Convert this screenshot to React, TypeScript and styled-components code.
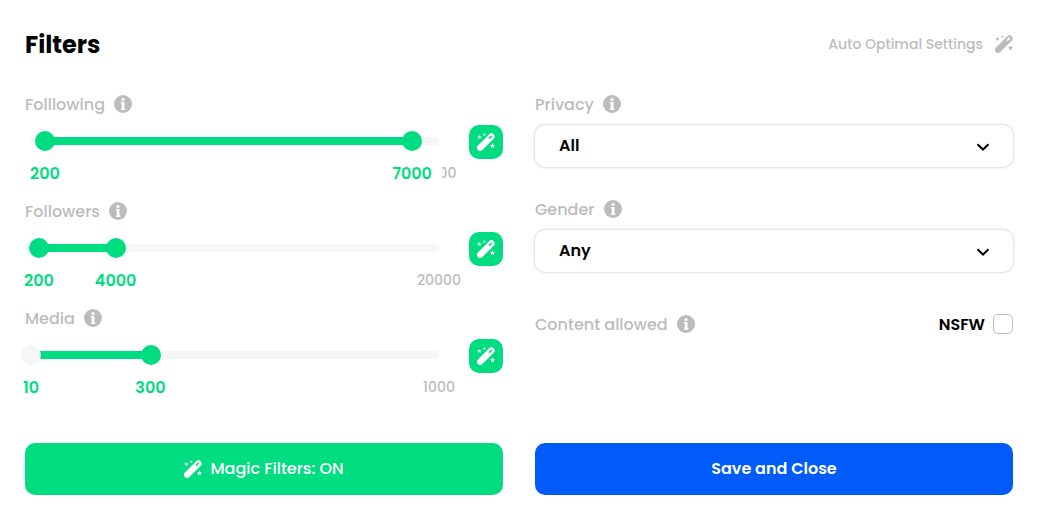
import React, { useId, useState } from "react";
import styled, { createGlobalStyle } from "styled-components";

const green = "#00dd80";
const grey = "#bcbcbc";
const pale = "#f6f6f6";

const GlobalStyle = createGlobalStyle`
  *, *::before, *::after { box-sizing: border-box; }
  body {
    margin: 0;
    background: #fff;
    color: #000;
    font-family: Poppins, Inter, "Open Sans", sans-serif;
    font-size: 16px;
    line-height: 24px;
    -webkit-font-smoothing: antialiased;
  }
  button, input, select { font: inherit; color: inherit; margin: 0; }
  button { cursor: pointer; border: 0; padding: 0; }
  svg { display: block; flex: none; }
`;

const Panel = styled.main`
  padding: 24px 25px;
`;

const Header = styled.header`
  display: flex;
  align-items: center;
  justify-content: space-between;
  height: 40px;
`;

const Title = styled.h1`
  margin: 0;
  padding-top: 2px;
  font-size: 24px;
  line-height: 40px;
  font-weight: 700;
`;

const AutoButton = styled.button`
  display: flex;
  align-items: center;
  gap: 12px;
  background: none;
  color: ${grey};
  font-size: 14px;
  font-weight: 500;
`;

const Columns = styled.div`
  display: grid;
  grid-template-columns: 1fr 1fr;
  column-gap: 32px;
  margin-top: 28px;
`;

const FieldLabel = styled.div`
  display: flex;
  align-items: center;
  gap: 9px;
  height: 24px;
  color: ${grey};
  font-weight: 500;
`;

const LabelText = styled.span`
  padding-top: 2px;
`;

const RangeField = styled.section`
  height: 107px;
`;

const RangeRow = styled.div`
  display: flex;
  align-items: flex-start;
  gap: 30px;
  padding: 9px 0 0 6px;
`;

const RangeBody = styled.div`
  flex: 1;
  min-width: 0;
`;

const Track = styled.div`
  position: relative;
  height: 8px;
  margin: 12px 0 16px;
  border-radius: 4px;
  background: ${pale};
`;

const Fill = styled.div`
  position: absolute;
  top: 0;
  height: 100%;
  background: ${green};
`;

const Thumb = styled.input<{ $idle: boolean }>`
  position: absolute;
  top: -6px;
  left: -10px;
  width: calc(100% + 20px);
  height: 20px;
  appearance: none;
  background: none;
  pointer-events: none;
  outline: none;

  &::-webkit-slider-runnable-track {
    height: 20px;
    background: none;
  }
  &::-webkit-slider-thumb {
    appearance: none;
    width: 20px;
    height: 20px;
    border-radius: 50%;
    background: ${(p) => (p.$idle ? pale : green)};
    pointer-events: auto;
    cursor: pointer;
  }
`;

const Scale = styled.div`
  position: relative;
  height: 24px;
`;

const Mark = styled.span<{ $limit?: boolean }>`
  position: absolute;
  top: 0;
  padding: ${(p) => (p.$limit ? "0" : "1px 10px 0")};
  transform: translateX(-50%);
  background: #fff;
  color: ${(p) => (p.$limit ? grey : green)};
  font-size: ${(p) => (p.$limit ? 14 : 16)}px;
  font-weight: ${(p) => (p.$limit ? 500 : 600)};
  white-space: nowrap;
`;

const WandButton = styled.button`
  display: grid;
  place-items: center;
  width: 34px;
  height: 34px;
  border-radius: 10px;
  background: ${green};
  color: #fff;
`;

const SelectField = styled.section`
  height: 105px;
`;

const SelectBox = styled.div`
  display: grid;
  align-items: center;
  margin-top: 9px;

  & > * { grid-area: 1 / 1; }
  svg { justify-self: end; margin-right: 23px; pointer-events: none; }
`;

const Select = styled.select`
  appearance: none;
  width: 100%;
  height: 42px;
  padding: 0 48px 0 24px;
  border: 0;
  border-radius: 10px;
  background: #fff;
  box-shadow: 0 0 3px rgba(0, 0, 0, 0.28);
  font-weight: 600;
`;

const ContentRow = styled.section`
  display: flex;
  align-items: center;
  justify-content: space-between;
  padding-top: 10px;
`;

const CheckLabel = styled.label`
  display: flex;
  align-items: center;
  gap: 8px;
  height: 24px;
  color: #000;
  font-weight: 600;
`;

const Checkbox = styled.input`
  appearance: none;
  width: 20px;
  height: 20px;
  border: 1px solid ${grey};
  border-radius: 5px;
  background: #fff;
  &:checked { background: ${green}; border-color: ${green}; }
`;

const Actions = styled.footer`
  display: grid;
  grid-template-columns: 1fr 1fr;
  column-gap: 32px;
  margin-top: 30px;
`;

const ActionButton = styled.button<{ $color: string; $weight: number }>`
  display: flex;
  align-items: center;
  justify-content: center;
  gap: 8px;
  height: 52px;
  border-radius: 10px;
  background: ${(p) => p.$color};
  color: #fff;
  font-weight: ${(p) => p.$weight};
`;

const WandIcon = () => (
  <svg width="18" height="18" viewBox="0 0 18 18" fill="currentColor" aria-hidden="true">
    <path
      fillRule="evenodd"
      d="M.9 12.5 12.2 1.2a3.2 3.2 0 0 1 4.5 0 3.2 3.2 0 0 1 0 4.5L5.4 17a3.2 3.2 0 0 1-4.5 0 3.2 3.2 0 0 1 0-4.5ZM12 4.6a.8.8 0 0 0 0 1.1.8.8 0 0 0 1.1 0l1.9-1.9a.8.8 0 0 0 0-1.1.8.8 0 0 0-1.1 0Z"
    />
    <path d="m2.5 1.9.6 1.3 1.5.2-1.1 1 .3 1.5-1.3-.8-1.4.8.3-1.5-1.1-1 1.5-.2Z" />
    <path d="m7.3 0 .5 1 1.1.1-.9.7.3 1.1-1-.6-1 .6.3-1.1-.8-.7 1.1-.1Z" />
    <path d="m15.5 10.3.8 1.6 1.7.2-1.2 1.2.3 1.8-1.6-.9-1.6.9.3-1.8-1.2-1.2 1.7-.2Z" />
  </svg>
);

const InfoIcon = () => (
  <svg width="18" height="18" viewBox="0 0 18 18" aria-hidden="true">
    <circle cx="9" cy="9" r="9" fill={grey} />
    <circle cx="9" cy="4.5" r="1.6" fill="#fff" />
    <path d="M6.9 7h3.6v6.5h.8V15H6.9v-1.5h.8v-5h-.8Z" fill="#fff" />
  </svg>
);

const ChevronIcon = () => (
  <svg
    width="14"
    height="14"
    viewBox="0 0 14 14"
    fill="none"
    stroke="#000"
    strokeWidth="2"
    aria-hidden="true"
  >
    <path d="m1.5 5.3 5.5 5.2 5.5-5.2" />
  </svg>
);

interface RangeProps {
  label: string;
  min: number;
  max: number;
  initial: [number, number];
}

function RangeFilter({ label, min, max, initial }: RangeProps) {
  const [low, setLow] = useState(initial[0]);
  const [high, setHigh] = useState(initial[1]);
  const at = (value: number) => ((value - min) / (max - min)) * 100;

  return (
    <RangeField>
      <FieldLabel>
        <LabelText>{label}</LabelText>
        <InfoIcon />
      </FieldLabel>
      <RangeRow>
        <RangeBody>
          <Track>
            <Fill style={{ left: `${at(low)}%`, width: `${at(high) - at(low)}%` }} />
            <Thumb
              type="range"
              aria-label={`${label} minimum`}
              $idle={low === min}
              min={min}
              max={max}
              value={low}
              onChange={(e) => setLow(Math.min(Number(e.target.value), high))}
            />
            <Thumb
              type="range"
              aria-label={`${label} maximum`}
              $idle={false}
              min={min}
              max={max}
              value={high}
              onChange={(e) => setHigh(Math.max(Number(e.target.value), low))}
            />
          </Track>
          <Scale>
            <Mark $limit style={{ left: "100%" }}>{max}</Mark>
            <Mark style={{ left: `${at(low)}%` }}>{low}</Mark>
            <Mark style={{ left: `${at(high)}%` }}>{high}</Mark>
          </Scale>
        </RangeBody>
        <WandButton type="button" aria-label={`Optimise ${label}`}>
          <WandIcon />
        </WandButton>
      </RangeRow>
    </RangeField>
  );
}

function SelectFilter({ label, options }: { label: string; options: string[] }) {
  const id = useId();
  return (
    <SelectField>
      <FieldLabel as="label" htmlFor={id}>
        <LabelText>{label}</LabelText>
        <InfoIcon />
      </FieldLabel>
      <SelectBox>
        <Select id={id}>
          {options.map((option) => (
            <option key={option}>{option}</option>
          ))}
        </Select>
        <ChevronIcon />
      </SelectBox>
    </SelectField>
  );
}

export default function App() {
  return (
    <>
      <GlobalStyle />
      <Panel>
        <Header>
          <Title>Filters</Title>
          <AutoButton type="button">
            Auto Optimal Settings
            <WandIcon />
          </AutoButton>
        </Header>
        <Columns>
          <div>
            <RangeFilter label="Folllowing" min={-60} max={7500} initial={[200, 7000]} />
            <RangeFilter label="Followers" min={-190} max={20000} initial={[200, 4000]} />
            <RangeFilter label="Media" min={10} max={1000} initial={[10, 300]} />
          </div>
          <div>
            <SelectFilter label="Privacy" options={["All"]} />
            <SelectFilter label="Gender" options={["Any"]} />
            <ContentRow>
              <FieldLabel>
                <LabelText>Content allowed</LabelText>
                <InfoIcon />
              </FieldLabel>
              <CheckLabel>
                <LabelText>NSFW</LabelText>
                <Checkbox type="checkbox" />
              </CheckLabel>
            </ContentRow>
          </div>
        </Columns>
        <Actions>
          <ActionButton type="button" $color={green} $weight={500}>
            <WandIcon />
            Magic Filters: ON
          </ActionButton>
          <ActionButton type="button" $color="#005bf9" $weight={600}>
            Save and Close
          </ActionButton>
        </Actions>
      </Panel>
    </>
  );
}
